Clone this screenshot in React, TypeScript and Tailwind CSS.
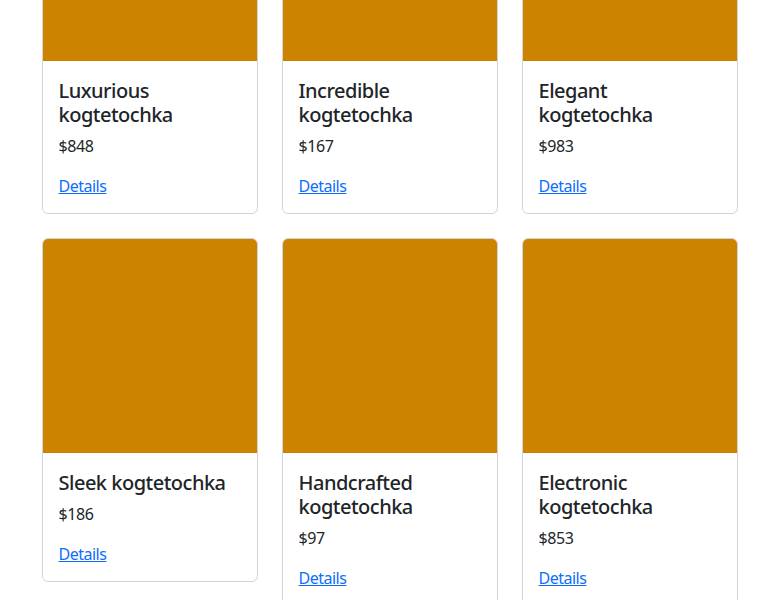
const products = [
  { name: "Luxurious kogtetochka", price: 848 },
  { name: "Incredible kogtetochka", price: 167 },
  { name: "Elegant kogtetochka", price: 983 },
  { name: "Sleek kogtetochka", price: 186 },
  { name: "Handcrafted kogtetochka", price: 97 },
  { name: "Electronic kogtetochka", price: 853 },
];

export default function App() {
  return (
    <div className="min-h-[600px] overflow-hidden bg-white font-['Noto_Sans',sans-serif] text-[#212529]">
      <div className="mx-auto -mt-[154px] grid w-[696px] grid-cols-3 items-start gap-6">
        {products.map((p) => (
          <div
            key={p.name}
            className="flex flex-col rounded-md border border-[#d3d4d5] bg-white"
          >
            <div className="h-[214px] rounded-t-[5px] bg-[#cc8400]" />
            <div className="p-4">
              <h5 className="mb-1.5 pt-0.5 text-[20px] font-medium leading-[1.2] tracking-[-0.5px]">
                {p.name}
              </h5>
              <p className="mb-[15px] pt-px text-base leading-6 tracking-[-0.4px]">
                ${p.price}
              </p>
              <a
                href="#"
                className="block pt-px text-base leading-6 tracking-[-0.5px] text-[#0d6efd] underline"
              >
                <span className="-mb-px block">Details</span>
              </a>
            </div>
          </div>
        ))}
      </div>
    </div>
  );
}
